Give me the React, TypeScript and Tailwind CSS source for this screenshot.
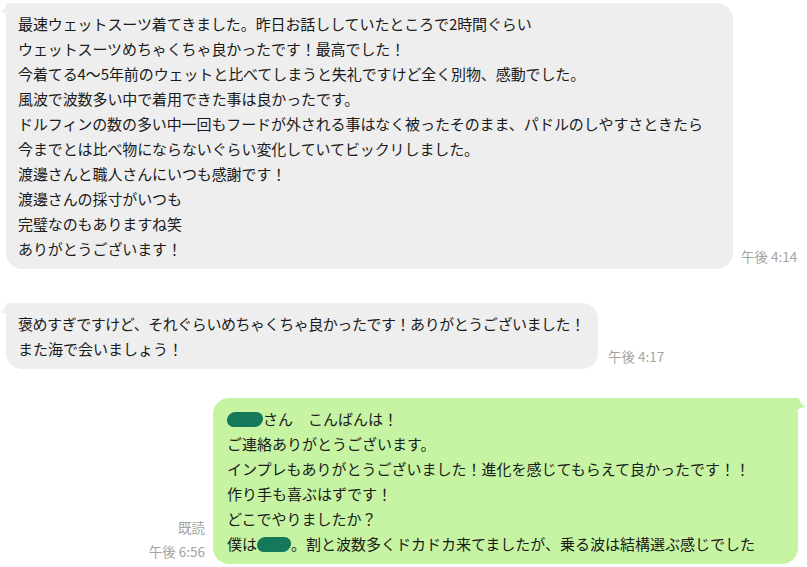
const font = {
  fontFamily: '"Noto Sans CJK JP", "Noto Sans", sans-serif',
};

const firstMessage = [
  "最速ウェットスーツ着てきました。昨日お話ししていたところで2時間ぐらい",
  "ウェットスーツめちゃくちゃ良かったです！最高でした！",
  "今着てる4〜5年前のウェットと比べてしまうと失礼ですけど全く別物、感動でした。",
  "風波で波数多い中で着用できた事は良かったです。",
  "ドルフィンの数の多い中一回もフードが外される事はなく被ったそのまま、パドルのしやすさときたら",
  "今までとは比べ物にならないぐらい変化していてビックリしました。",
  "渡邊さんと職人さんにいつも感謝です！",
  "渡邊さんの採寸がいつも",
  "完璧なのもありますね笑",
  "ありがとうございます！",
];

function Blob({ width }: { width: number }) {
  return (
    <span
      className="inline-block h-[15px] rounded-[8px] bg-[#16785a] align-[-2px] -skew-x-6"
      style={{ width }}
    />
  );
}

function LeftTail() {
  return (
    <svg
      className="absolute left-[-6px] top-0"
      width="14"
      height="16"
      viewBox="0 0 14 16"
    >
      <path d="M14 0 L14 16 Q9 10 0 9 Q6 6 7 0 Z" fill="#eeeeee" />
    </svg>
  );
}

function RightTail() {
  return (
    <svg
      className="absolute right-[-8px] top-0"
      width="14"
      height="16"
      viewBox="0 0 14 16"
    >
      <path d="M0 0 L0 16 Q5 10 14 9 Q8 6 7 0 Z" fill="#c6f4a2" />
    </svg>
  );
}

function Time({ children }: { children: React.ReactNode }) {
  return (
    <span className="text-[13.5px] leading-[17px] text-[#a3a3a3] whitespace-nowrap">
      {children}
    </span>
  );
}

export default function App() {
  return (
    <div
      className="w-[807px] h-[567px] bg-white overflow-hidden text-[#1a1a1a]"
      style={font}
    >
      <div className="flex items-end ml-[6px] pt-[3px]">
        <div className="relative w-[727px] bg-[#eeeeee] rounded-[16px] rounded-tl-[6px] pl-[12px] pt-[8px] pb-[8px] text-[15px] leading-[25px]">
          <LeftTail />
          {firstMessage.map((line) => (
            <div key={line} className="whitespace-nowrap tracking-[-0.1px]">
              {line}
            </div>
          ))}
        </div>
        <div className="ml-[8px] mb-[2px]">
          <Time>午後 4:14</Time>
        </div>
      </div>

      <div className="flex items-end ml-[6px] mt-[34px]">
        <div className="relative w-[592px] bg-[#eeeeee] rounded-[16px] rounded-tl-[6px] pl-[12px] pt-[8px] pb-[8px] text-[15px] leading-[25px]">
          <LeftTail />
          <div className="whitespace-nowrap tracking-[-0.45px]">
            褒めすぎですけど、それぐらいめちゃくちゃ良かったです！ありがとうございました！
          </div>
          <div className="whitespace-nowrap">また海で会いましょう！</div>
        </div>
        <div className="ml-[10px] mb-[2px]">
          <Time>午後 4:17</Time>
        </div>
      </div>

      <div className="flex items-end justify-end mr-[9px] mt-[29px]">
        <div className="flex flex-col items-end mr-[8px] mb-[2px]">
          <Time>既読</Time>
          <span className="mt-[2px]">
            <Time>午後 6:56</Time>
          </span>
        </div>
        <div className="relative w-[585px] bg-[#c6f4a2] rounded-[16px] rounded-tr-[6px] pl-[14px] pt-[8px] pb-[8px] text-[15px] leading-[25px]">
          <RightTail />
          <div className="whitespace-nowrap">
            <Blob width={36} />
            さん　こんばんは！
          </div>
          <div className="whitespace-nowrap">ご連絡ありがとうございます。</div>
          <div className="whitespace-nowrap">
            インプレもありがとうございました！進化を感じてもらえて良かったです！！
          </div>
          <div className="whitespace-nowrap">作り手も喜ぶはずです！</div>
          <div className="whitespace-nowrap">どこでやりましたか？</div>
          <div className="whitespace-nowrap">
            僕は<Blob width={34} />。割と波数多くドカドカ来てましたが、乗る波は結構選ぶ感じでした
          </div>
        </div>
      </div>
    </div>
  );
}
